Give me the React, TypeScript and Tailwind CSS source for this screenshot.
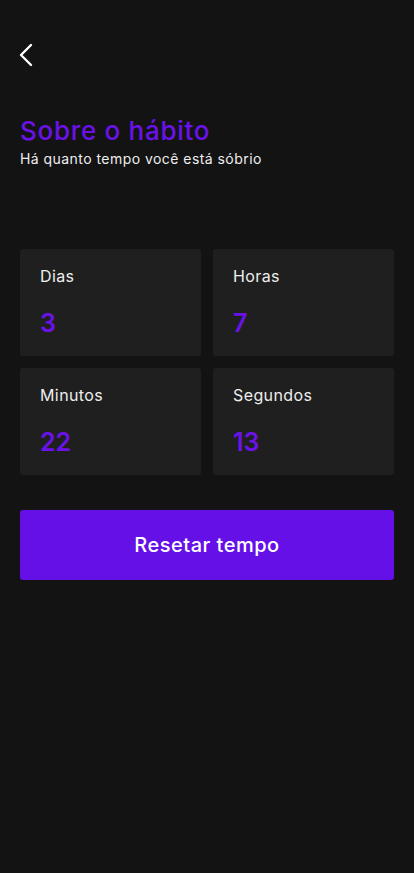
import React from "react";

const items = [
  { label: "Dias", value: "3" },
  { label: "Horas", value: "7" },
  { label: "Minutos", value: "22" },
  { label: "Segundos", value: "13" },
];

export default function App() {
  return (
    <div
      className="min-h-[873px] w-full bg-[#131313] px-5 text-white"
      style={{ fontFamily: "Inter, 'Open Sans', sans-serif" }}
    >
      <div className="pt-[43px]">
        <svg width="14" height="24" viewBox="0 0 14 24" fill="none" className="-ml-[1px]">
          <path d="M12 2 L2 12 L12 22" stroke="white" strokeWidth="2.4" strokeLinecap="round" strokeLinejoin="round" />
        </svg>
      </div>
      <h1 className="mt-[48px] text-[26px] font-medium leading-[32px] tracking-[0.7px] text-[#6a12e8]">Sobre o hábito</h1>
      <p className="mt-[2px] text-[14px] leading-[20px] tracking-[0.45px] text-[#eeeeee]">Há quanto tempo você está sóbrio</p>
      <div className="mt-[80px] grid grid-cols-2 gap-3">
        {items.map((it) => (
          <div key={it.label} className="h-[107px] rounded-[3px] bg-[#1f1f1f] px-5 pt-[17px]">
            <div className="text-[16px] leading-[20px] tracking-[0.4px] text-[#eeeeee]">{it.label}</div>
            <div className="mt-[22px] text-[25px] font-semibold leading-[30px] text-[#6a12e8]">{it.value}</div>
          </div>
        ))}
      </div>
      <button className="mt-[35px] flex h-[70px] w-full items-center justify-center rounded-[3px] bg-[#6610e8] text-[20px] font-medium tracking-[0.5px] text-white">
        Resetar tempo
      </button>
    </div>
  );
}
